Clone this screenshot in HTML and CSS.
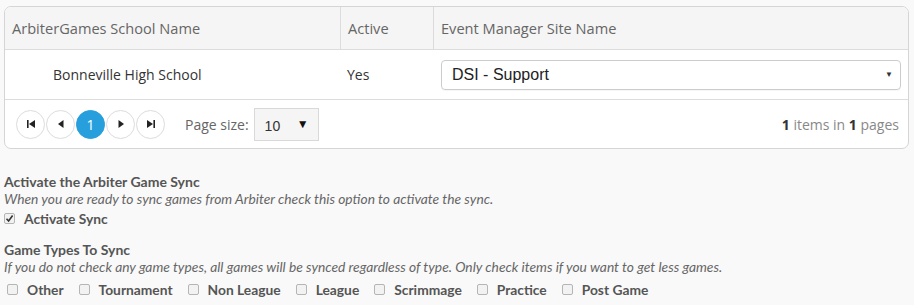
FILE: index.html
```html
<!DOCTYPE html>
<html>
<head>
<meta charset="utf-8">
<link rel="stylesheet" href="styles.css">
</head>
<body>
<div class="grid">
  <div class="row head">
    <div class="cell c1">ArbiterGames School Name</div>
    <div class="cell c2">Active</div>
    <div class="cell c3">Event Manager Site Name</div>
  </div>
  <div class="row data">
    <div class="cell c1 school">Bonneville High School</div>
    <div class="cell c2">Yes</div>
    <div class="cell c3">
      <div class="select"><span>DSI - Support</span><span class="caret">&#9660;</span></div>
    </div>
  </div>
  <div class="pager">
    <div class="pbtns">
      <span class="pbtn"><svg width="10" height="10" viewBox="0 0 10 10"><rect x="1" y="1" width="1.6" height="8" fill="#222"/><polygon points="9,1 9,9 3,5" fill="#222"/></svg></span>
      <span class="pbtn"><svg width="10" height="10" viewBox="0 0 10 10"><polygon points="7.5,1 7.5,9 2,5" fill="#222"/></svg></span>
      <span class="pbtn active">1</span>
      <span class="pbtn"><svg width="10" height="10" viewBox="0 0 10 10"><polygon points="2.5,1 2.5,9 8,5" fill="#222"/></svg></span>
      <span class="pbtn"><svg width="10" height="10" viewBox="0 0 10 10"><polygon points="1,1 1,9 7,5" fill="#222"/><rect x="7.4" y="1" width="1.6" height="8" fill="#222"/></svg></span>
    </div>
    <span class="psize-label">Page size:</span>
    <div class="psize"><span>10</span><span class="pcaret">&#9660;</span></div>
    <div class="pinfo"><b>1</b> items in <b>1</b> pages</div>
  </div>
</div>

<div class="section first">
  <div class="title">Activate the Arbiter Game Sync</div>
  <div class="hint">When you are ready to sync games from Arbiter check this option to activate the sync.</div>
  <label class="chk"><span class="box checked"><svg width="9" height="9" viewBox="0 0 9 9"><path d="M1.5 4.8 L3.6 7 L7.6 1.6" stroke="#333" stroke-width="1.6" fill="none"/></svg></span>Activate Sync</label>
</div>

<div class="section second">
  <div class="title">Game Types To Sync</div>
  <div class="hint">If you do not check any game types, all games will be synced regardless of type. Only check items if you want to get less games.</div>
  <div class="types">
    <label class="chk"><span class="box"></span>Other</label>
    <label class="chk"><span class="box"></span>Tournament</label>
    <label class="chk"><span class="box"></span>Non League</label>
    <label class="chk"><span class="box"></span>League</label>
    <label class="chk"><span class="box"></span>Scrimmage</label>
    <label class="chk"><span class="box"></span>Practice</label>
    <label class="chk"><span class="box"></span>Post Game</label>
  </div>
</div>
</body>
</html>
```

FILE: styles.css
```css
html, body {
  margin: 0;
  padding: 0;
  background: #f9f9f9;
}
body {
  padding: 6px 5px 0 4px;
  font-family: "Open Sans", "Liberation Sans", sans-serif;
  color: #555;
}
.grid {
  border: 1px solid #d5d5d5;
  border-radius: 7px;
  background: #fff;
  overflow: hidden;
}
.row {
  display: grid;
  grid-template-columns: 336px 93px 1fr;
}
.head {
  background: #f5f5f5;
  height: 42px;
  border-bottom: 1px solid #dcdcdc;
  font-size: 14.6px;
  color: #666;
}
.head .cell {
  display: flex;
  align-items: center;
  padding-left: 7px;
}
.head .c1, .head .c2 {
  border-right: 1px solid #dcdcdc;
}
.data {
  height: 49px;
  border-bottom: 1px solid #dcdcdc;
  font-size: 14px;
  color: #333;
}
.data .cell {
  display: flex;
  align-items: center;
  padding-left: 7px;
}
.data .c2 { padding-left: 6px; }
.data .school { padding-left: 48px; }
.data .c1, .data .c2 { border-right: 1px solid transparent; }
.data .c3 { padding-right: 7px; }
.select {
  flex: 1;
  height: 28px;
  border: 1px solid #ccc;
  border-radius: 4px;
  display: flex;
  align-items: center;
  justify-content: space-between;
  padding: 0 7px 0 10px;
  font-family: "Liberation Sans", Arial, sans-serif;
  font-size: 16px;
  color: #222;
  box-shadow: 0 1px 1px rgba(0,0,0,0.04);
}
.caret {
  font-size: 8px;
  color: #333;
}
.pager {
  height: 48px;
  display: flex;
  align-items: center;
  padding: 0 9px 0 11px;
  font-size: 14px;
}
.pbtns {
  display: flex;
  gap: 1px;
}
.pbtn {
  width: 27px;
  height: 27px;
  border: 1px solid #dcdcdc;
  border-radius: 50%;
  display: flex;
  align-items: center;
  justify-content: center;
  background: #fff;
}
.pbtn.active {
  background: #279fdd;
  border-color: #279fdd;
  color: #fff;
  font-size: 14px;
}
.psize-label {
  margin-left: 20px;
  color: #666;
}
.psize {
  margin-left: 5px;
  width: 65px;
  height: 33px;
  box-sizing: border-box;
  border: 1px solid #d9d9d9;
  background: #f5f5f5;
  display: flex;
  align-items: center;
  justify-content: space-between;
  padding: 3px 9px 0 10px;
  font-family: "Liberation Sans", Arial, sans-serif;
  color: #333;
}
.pcaret {
  font-size: 12px;
  color: #111;
  margin-top: -3px;
}
.pinfo {
  margin-left: auto;
  color: #888;
}
.pinfo b { color: #333; font-weight: 700; }
.section {
  font-family: "Lato", "Open Sans", sans-serif;
}
.section.first { margin-top: 24px; }
.section.second { margin-top: 12px; }
.title {
  font-weight: 700;
  font-size: 14px;
  color: #555;
  line-height: 17px;
}
.hint {
  font-style: italic;
  font-size: 13.8px;
  color: #666;
  line-height: 17px;
}
.chk {
  display: inline-flex;
  align-items: center;
  font-weight: 700;
  font-size: 13.8px;
  color: #555;
  line-height: 20px;
}
.box {
  width: 9px;
  height: 9px;
  border: 1px solid #b5b5b5;
  border-radius: 2px;
  background: #f2f2f2;
  margin: 0 9px 0 0;
  display: inline-flex;
  align-items: center;
  justify-content: center;
}
.types {
  display: flex;
  gap: 15px;
  margin-top: 5px;
  padding-left: 3px;
}
```
